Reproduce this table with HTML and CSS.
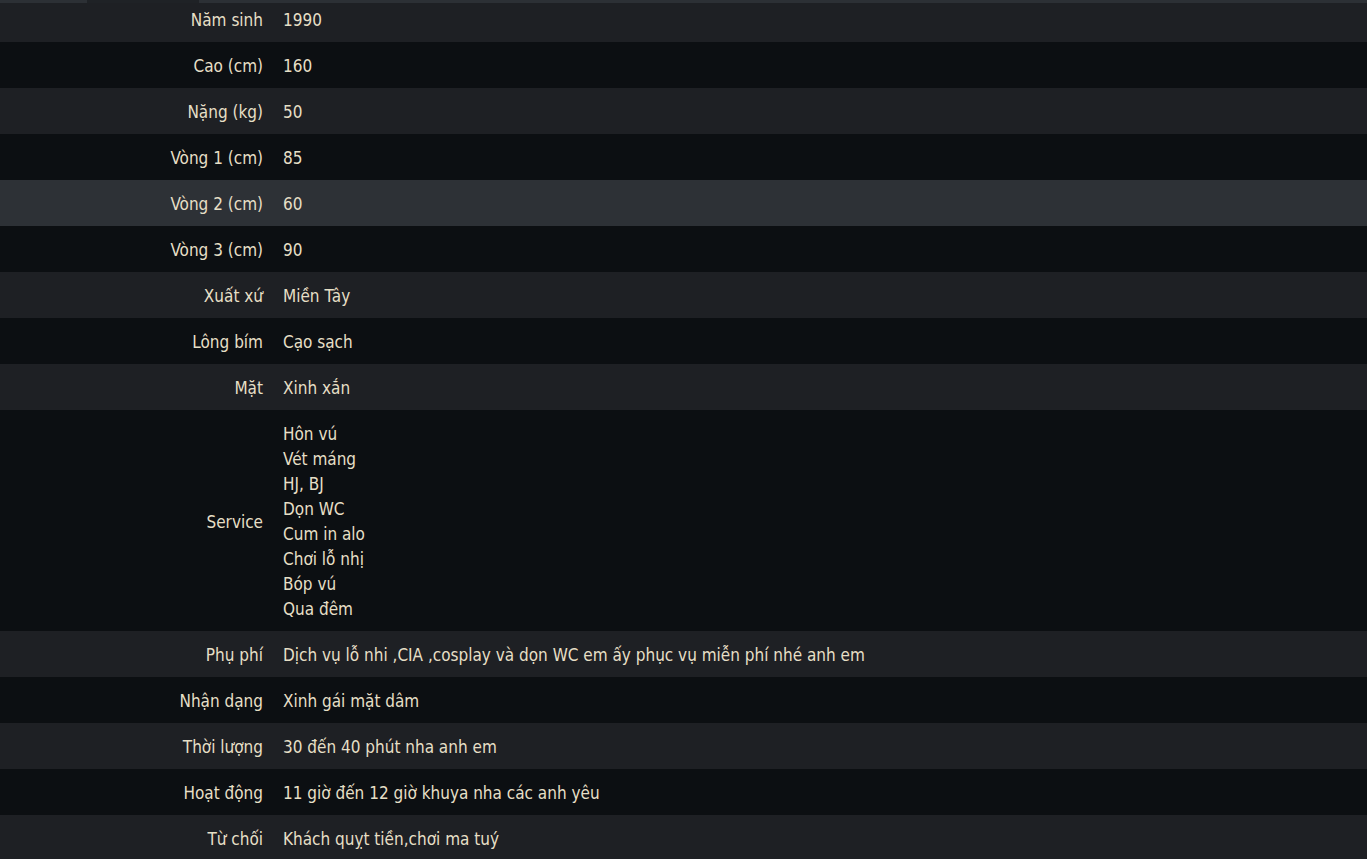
FILE: index.html
```html
<!DOCTYPE html>
<html lang="vi">
<head>
  <meta charset="UTF-8">
  <title>Thông tin</title>
  <link rel="stylesheet" href="styles.css">
</head>
<body>
  <!-- top edge of the previous block -->
  <div class="top-edge">
    <span class="edge-gap"></span>
    <span class="edge-dark"></span>
  </div>

  <table class="info-table">
    <tbody>
      <tr><th>Năm sinh</th><td>1990</td></tr>
      <tr><th>Cao (cm)</th><td>160</td></tr>
      <tr><th>Nặng (kg)</th><td>50</td></tr>
      <tr><th>Vòng 1 (cm)</th><td>85</td></tr>
      <tr class="hover"><th>Vòng 2 (cm)</th><td>60</td></tr>
      <tr><th>Vòng 3 (cm)</th><td>90</td></tr>
      <tr><th>Xuất xứ</th><td>Miền Tây</td></tr>
      <tr><th>Lông bím</th><td>Cạo sạch</td></tr>
      <tr><th>Mặt</th><td>Xinh xắn</td></tr>
      <tr>
        <th>Service</th>
        <td>Hôn vú<br>Vét máng<br>HJ, BJ<br>Dọn WC<br>Cum in alo<br>Chơi lỗ nhị<br>Bóp vú<br>Qua đêm</td>
      </tr>
      <tr><th>Phụ phí</th><td>Dịch vụ lỗ nhi ,CIA ,cosplay và dọn WC em ấy phục vụ miễn phí nhé anh em</td></tr>
      <tr><th>Nhận dạng</th><td>Xinh gái mặt dâm</td></tr>
      <tr><th>Thời lượng</th><td>30 đến 40 phút nha anh em</td></tr>
      <tr><th>Hoạt động</th><td>11 giờ đến 12 giờ khuya nha các anh yêu</td></tr>
      <tr><th>Từ chối</th><td>Khách quỵt tiền,chơi ma tuý</td></tr>
    </tbody>
  </table>
</body>
</html>
```

FILE: styles.css
```css
body {
  margin: 0;
  background: #1e2024;
  font-family: "DejaVu Sans Condensed", "DejaVu Sans", sans-serif;
  font-size: 17px;
  color: #e6dfc6;
  overflow: hidden;
  position: relative;
}

.top-edge {
  position: absolute;
  top: 0;
  left: 0;
  right: 0;
  height: 3px;
  background: #2c3035;
  display: flex;
  z-index: 2;
}

.edge-gap {
  width: 87px;
}

.edge-dark {
  width: 112px;
  background: #1f2226;
}

.info-table {
  width: 100%;
  border-collapse: collapse;
  margin-top: -4px;
}

.info-table th,
.info-table td {
  padding: 12px 10px 9px;
  line-height: 25px;
  vertical-align: middle;
}

.info-table th {
  width: 253px;
  text-align: right;
  font-weight: normal;
}

.info-table td {
  text-align: left;
}

.info-table tr:nth-child(odd) {
  background: #1e2024;
}

.info-table tr:nth-child(even) {
  background: #0c0f12;
}

.info-table tr.hover {
  background: #2d3136;
}
```
